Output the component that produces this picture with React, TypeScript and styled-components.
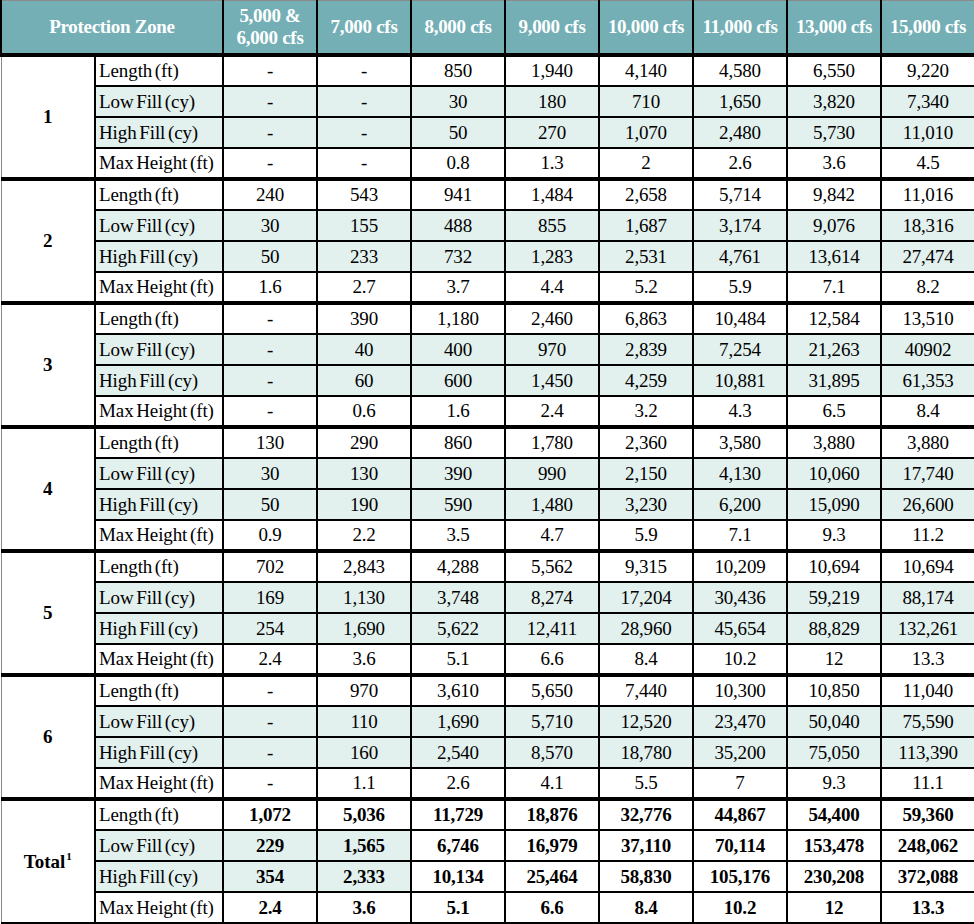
import React from 'react';
import styled, { createGlobalStyle, css } from 'styled-components';

const GlobalStyle = createGlobalStyle`
  html, body {
    margin: 0;
    padding: 0;
    background: #fff;
  }
`;

const Table = styled.table`
  width: 974px;
  table-layout: fixed;
  border-collapse: collapse;
  font-family: 'Liberation Serif', 'Times New Roman', serif;
  color: #000;
  border: 1px solid #8a8a8a;
`;

const HeadCell = styled.th`
  height: 52px;
  padding: 0 2px;
  background: #74afb6;
  color: #fff;
  font-size: 19px;
  font-weight: bold;
  line-height: 22px;
  letter-spacing: -0.3px;
  text-align: center;
  border: 2px solid #000;
  border-top: 1px solid #8a8a8a;
  border-bottom-width: 3px;
`;

const Row = styled.tr<{ $first?: boolean }>`
  height: 31px;
  ${(p) =>
    p.$first &&
    css`
      & > td {
        border-top-width: 4px;
      }
    `}
`;

const ZoneCell = styled.td`
  border: 2px solid #000;
  border-left: 1px solid #8a8a8a;
  border-top-width: 4px;
  font-size: 19px;
  font-weight: bold;
  text-align: center;
  vertical-align: middle;
  background: #fff;

  sup {
    font-size: 11px;
    vertical-align: 8px;
    margin-left: 1px;
  }
`;

const LabelCell = styled.td<{ $shade?: boolean }>`
  border: 2px solid #000;
  padding: 0 0 0 3px;
  font-size: 19px;
  letter-spacing: -0.1px;
  word-spacing: -2px;
  white-space: nowrap;
  overflow: hidden;
  background: ${(p) => (p.$shade ? '#e2f0ee' : '#fff')};
`;

const ValueCell = styled.td<{ $shade?: boolean; $bold?: boolean }>`
  border: 2px solid #000;
  padding: 0;
  font-size: 19px;
  letter-spacing: -0.2px;
  text-align: center;
  white-space: nowrap;
  font-weight: ${(p) => (p.$bold ? 'bold' : 'normal')};
  background: ${(p) => (p.$shade ? '#e2f0ee' : '#fff')};
`;

const labels = ['Length (ft)', 'Low Fill (cy)', 'High Fill (cy)', 'Max Height (ft)'];

const columns = ['7,000 cfs', '8,000 cfs', '9,000 cfs', '10,000 cfs', '11,000 cfs', '13,000 cfs', '15,000 cfs'];

type Group = { zone: string; rows: string[][]; total?: boolean };

const groups: Group[] = [
  {
    zone: '1',
    rows: [
      ['-', '-', '850', '1,940', '4,140', '4,580', '6,550', '9,220'],
      ['-', '-', '30', '180', '710', '1,650', '3,820', '7,340'],
      ['-', '-', '50', '270', '1,070', '2,480', '5,730', '11,010'],
      ['-', '-', '0.8', '1.3', '2', '2.6', '3.6', '4.5'],
    ],
  },
  {
    zone: '2',
    rows: [
      ['240', '543', '941', '1,484', '2,658', '5,714', '9,842', '11,016'],
      ['30', '155', '488', '855', '1,687', '3,174', '9,076', '18,316'],
      ['50', '233', '732', '1,283', '2,531', '4,761', '13,614', '27,474'],
      ['1.6', '2.7', '3.7', '4.4', '5.2', '5.9', '7.1', '8.2'],
    ],
  },
  {
    zone: '3',
    rows: [
      ['-', '390', '1,180', '2,460', '6,863', '10,484', '12,584', '13,510'],
      ['-', '40', '400', '970', '2,839', '7,254', '21,263', '40902'],
      ['-', '60', '600', '1,450', '4,259', '10,881', '31,895', '61,353'],
      ['-', '0.6', '1.6', '2.4', '3.2', '4.3', '6.5', '8.4'],
    ],
  },
  {
    zone: '4',
    rows: [
      ['130', '290', '860', '1,780', '2,360', '3,580', '3,880', '3,880'],
      ['30', '130', '390', '990', '2,150', '4,130', '10,060', '17,740'],
      ['50', '190', '590', '1,480', '3,230', '6,200', '15,090', '26,600'],
      ['0.9', '2.2', '3.5', '4.7', '5.9', '7.1', '9.3', '11.2'],
    ],
  },
  {
    zone: '5',
    rows: [
      ['702', '2,843', '4,288', '5,562', '9,315', '10,209', '10,694', '10,694'],
      ['169', '1,130', '3,748', '8,274', '17,204', '30,436', '59,219', '88,174'],
      ['254', '1,690', '5,622', '12,411', '28,960', '45,654', '88,829', '132,261'],
      ['2.4', '3.6', '5.1', '6.6', '8.4', '10.2', '12', '13.3'],
    ],
  },
  {
    zone: '6',
    rows: [
      ['-', '970', '3,610', '5,650', '7,440', '10,300', '10,850', '11,040'],
      ['-', '110', '1,690', '5,710', '12,520', '23,470', '50,040', '75,590'],
      ['-', '160', '2,540', '8,570', '18,780', '35,200', '75,050', '113,390'],
      ['-', '1.1', '2.6', '4.1', '5.5', '7', '9.3', '11.1'],
    ],
  },
  {
    zone: 'Total',
    total: true,
    rows: [
      ['1,072', '5,036', '11,729', '18,876', '32,776', '44,867', '54,400', '59,360'],
      ['229', '1,565', '6,746', '16,979', '37,110', '70,114', '153,478', '248,062'],
      ['354', '2,333', '10,134', '25,464', '58,830', '105,176', '230,208', '372,088'],
      ['2.4', '3.6', '5.1', '6.6', '8.4', '10.2', '12', '13.3'],
    ],
  },
];

// fill rows are shaded; in the total block only the first two flow columns are
const isShaded = (rowIdx: number, colIdx: number, total?: boolean) => {
  const fillRow = rowIdx === 1 || rowIdx === 2;
  if (!fillRow) return false;
  if (total) return colIdx < 2;
  return true;
};

const App = () => {
  return (
    <>
      <GlobalStyle />
      <Table>
        <colgroup>
          <col style={{ width: 94 }} />
          <col style={{ width: 128 }} />
          {Array.from({ length: 8 }).map((_, i) => (
            <col key={i} style={{ width: 94 }} />
          ))}
        </colgroup>
        <thead>
          <tr>
            <HeadCell colSpan={2}>Protection Zone</HeadCell>
            <HeadCell>
              5,000 &amp;
              <br />
              6,000 cfs
            </HeadCell>
            {columns.map((c) => (
              <HeadCell key={c}>{c}</HeadCell>
            ))}
          </tr>
        </thead>
        <tbody>
          {groups.map((g) =>
            g.rows.map((vals, r) => (
              <Row key={g.zone + r} $first={r === 0}>
                {r === 0 && (
                  <ZoneCell rowSpan={4}>
                    {g.zone}
                    {g.total && <sup>1</sup>}
                  </ZoneCell>
                )}
                <LabelCell $shade={r === 1 || r === 2}>{labels[r]}</LabelCell>
                {vals.map((v, c) => (
                  <ValueCell key={c} $shade={isShaded(r, c, g.total)} $bold={g.total}>
                    {v}
                  </ValueCell>
                ))}
              </Row>
            )),
          )}
        </tbody>
      </Table>
    </>
  );
};

export default App;
